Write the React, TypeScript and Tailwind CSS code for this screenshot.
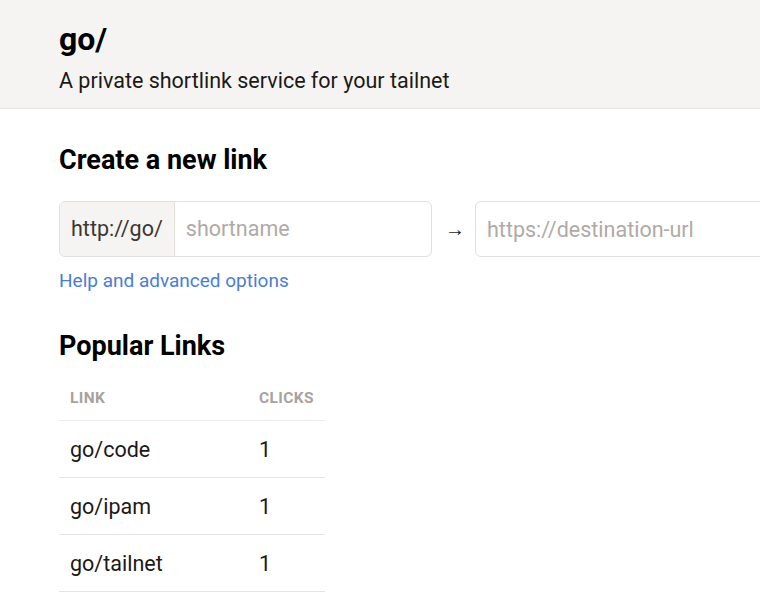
import React from 'react'

const links = [
  { name: 'go/code', clicks: 1 },
  { name: 'go/ipam', clicks: 1 },
  { name: 'go/tailnet', clicks: 1 },
]

export default function App() {
  return (
    <div className="min-h-screen w-[760px] overflow-hidden bg-white text-[#1c1917]" style={{ fontFamily: 'Roboto, "Liberation Sans", sans-serif' }}>
      {/* Header */}
      <header className="bg-[#f5f4f2] border-b border-[#e7e5e4] h-[109px] px-[59px] pt-[18px]">
        <h1 className="text-[32px] font-bold leading-[42px] text-black">go/</h1>
        <p className="text-[21.5px] leading-[28px] mt-[7px] text-[#1c1917]">A private shortlink service for your tailnet</p>
      </header>

      <main className="px-[59px]">
        {/* Create link */}
        <h2 className="text-[27px] font-bold leading-[34px] text-black mt-[34px]">Create a new link</h2>
        <div className="flex items-center mt-[24px] w-[900px]">
          <div className="flex h-[56px] w-[373px] rounded-md border border-[#e2dfdc] overflow-hidden">
            <span className="flex items-center px-[11px] bg-[#f5f4f2] border-r border-[#e2dfdc] text-[21.5px] text-[#3a3633]">http://go/</span>
            <input
              placeholder="shortname"
              className="flex-1 min-w-0 px-[11px] text-[21.5px] outline-none placeholder:text-[#b0aaa6]"
            />
          </div>
          <span className="ml-[13px] mr-[10px] text-[20px] text-[#1c1917]">→</span>
          <input
            placeholder="https://destination-url"
            className="h-[56px] w-[400px] rounded-md border border-[#e2dfdc] px-[11px] text-[21.5px] outline-none placeholder:text-[#b0aaa6]"
          />
        </div>
        <a href="#" className="block mt-[11px] text-[19px] leading-[26px] text-[#4a7dd4]">Help and advanced options</a>

        {/* Popular links */}
        <h2 className="text-[27px] font-bold leading-[34px] text-black mt-[35px]">Popular Links</h2>
        <table className="mt-[21px] w-[266px] text-left">
          <thead>
            <tr className="border-b border-[#ece9e6]">
              <th className="w-[200px] pl-[11px] pt-[3px] pb-[10px] text-[15.5px] font-bold uppercase tracking-wide text-[#a8a29e]">Link</th>
              <th className="pl-0 pt-[3px] pb-[10px] text-[15.5px] font-bold uppercase tracking-wide text-[#a8a29e]">Clicks</th>
            </tr>
          </thead>
          <tbody>
            {links.map((l) => (
              <tr key={l.name} className="border-b border-[#e7e5e4]">
                <td className="pl-[11px] h-[57px] pt-[2px] text-[21.5px]">{l.name}</td>
                <td className="pl-0 h-[57px] pt-[2px] text-[21.5px]">{l.clicks}</td>
              </tr>
            ))}
          </tbody>
        </table>
      </main>
    </div>
  )
}
